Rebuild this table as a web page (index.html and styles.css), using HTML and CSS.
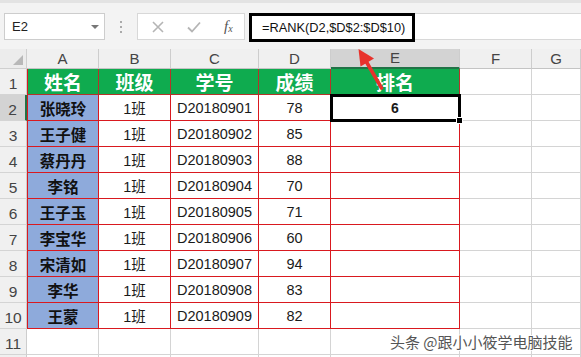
FILE: index.html
```html
<!DOCTYPE html>
<html>
<head>
<meta charset="utf-8">
<link rel="stylesheet" href="styles.css">
</head>
<body>
<div class="app">
  <div class="toolbar">
    <div class="namebox"><span>E2</span><span class="dd"></span></div>
    <div class="dots"><i></i><i></i><i></i></div>
    <div class="fxbtns">
      <svg class="ic" width="14" height="14" viewBox="0 0 14 14"><path d="M2 2L12 12M12 2L2 12" stroke="#b5b5b5" stroke-width="1.6" fill="none"/></svg>
      <svg class="ic" width="16" height="14" viewBox="0 0 16 14"><path d="M2 7.5L6 11.5L14 2.5" stroke="#b5b5b5" stroke-width="1.8" fill="none"/></svg>
      <span class="fx">f<sub>x</sub></span>
    </div>
    <div class="formula"><div class="fbox">=RANK(D2,$D$2:$D$10)</div></div>
  </div>
  <div class="sheet">
    <div class="corner"><span class="tri"></span></div>
    <div class="ch">A</div><div class="ch">B</div><div class="ch">C</div><div class="ch">D</div><div class="ch sel">E</div><div class="ch">F</div><div class="ch">G</div>

    <div class="rh">1</div>
    <div class="c hd first">姓名</div><div class="c hd">班级</div><div class="c hd">学号</div><div class="c hd">成绩</div><div class="c hd">排名</div><div class="c"></div><div class="c"></div>

    <div class="rh rsel">2</div>
    <div class="c nm first">张晓玲</div><div class="c t">1班</div><div class="c t">D20180901</div><div class="c t">78</div><div class="c t active"><b>6</b></div><div class="c"></div><div class="c"></div>

    <div class="rh">3</div>
    <div class="c nm first">王子健</div><div class="c t">1班</div><div class="c t">D20180902</div><div class="c t">85</div><div class="c t"></div><div class="c"></div><div class="c"></div>

    <div class="rh">4</div>
    <div class="c nm first">蔡丹丹</div><div class="c t">1班</div><div class="c t">D20180903</div><div class="c t">88</div><div class="c t"></div><div class="c"></div><div class="c"></div>

    <div class="rh">5</div>
    <div class="c nm first">李铭</div><div class="c t">1班</div><div class="c t">D20180904</div><div class="c t">70</div><div class="c t"></div><div class="c"></div><div class="c"></div>

    <div class="rh">6</div>
    <div class="c nm first">王子玉</div><div class="c t">1班</div><div class="c t">D20180905</div><div class="c t">71</div><div class="c t"></div><div class="c"></div><div class="c"></div>

    <div class="rh">7</div>
    <div class="c nm first">李宝华</div><div class="c t">1班</div><div class="c t">D20180906</div><div class="c t">60</div><div class="c t"></div><div class="c"></div><div class="c"></div>

    <div class="rh">8</div>
    <div class="c nm first">宋清如</div><div class="c t">1班</div><div class="c t">D20180907</div><div class="c t">94</div><div class="c t"></div><div class="c"></div><div class="c"></div>

    <div class="rh">9</div>
    <div class="c nm first">李华</div><div class="c t">1班</div><div class="c t">D20180908</div><div class="c t">83</div><div class="c t"></div><div class="c"></div><div class="c"></div>

    <div class="rh">10</div>
    <div class="c nm first">王蒙</div><div class="c t">1班</div><div class="c t">D20180909</div><div class="c t">82</div><div class="c t"></div><div class="c"></div><div class="c"></div>

    <div class="rh">11</div>
    <div class="c"></div><div class="c"></div><div class="c"></div><div class="c"></div><div class="c"></div><div class="c"></div><div class="c"></div>

    <div class="rh"></div>
    <div class="c"></div><div class="c"></div><div class="c"></div><div class="c"></div><div class="c"></div><div class="c"></div><div class="c"></div>
  </div>
  <svg class="arrow" width="581" height="357" viewBox="0 0 581 357">
    <path d="M381.5 88 L366.5 62" stroke="#e8322c" stroke-width="3.6" stroke-linecap="round" fill="none"/>
    <polygon points="358.5,49 374,58.5 360.5,66.5" fill="#e8322c"/>
  </svg>
  <div class="wm">头条 @跟小小筱学电脑技能</div>
</div>
</body>
</html>
```
FILE: styles.css
```css
html, body {
  margin: 0;
  padding: 0;
  background: #ffffff;
}
.app {
  position: relative;
  width: 581px;
  height: 357px;
  overflow: hidden;
  font-family: "Liberation Sans", Arial, sans-serif;
}
.toolbar {
  height: 49px;
  box-sizing: border-box;
  background: #f3f3f3;
  border-top: 3px solid #e3e3e3;
  padding-top: 10px;
  display: flex;
  align-items: flex-start;
}
.namebox {
  margin-left: 4px;
  width: 101px;
  height: 27px;
  box-sizing: border-box;
  background: #fff;
  border: 1px solid #cdcdcd;
  display: flex;
  align-items: center;
  justify-content: space-between;
  padding: 0 5px 0 7px;
  font-size: 13px;
  color: #222;
}
.dd {
  width: 0;
  height: 0;
  border-left: 4px solid transparent;
  border-right: 4px solid transparent;
  border-top: 4px solid #777;
}
.dots {
  width: 32px;
  height: 27px;
  display: flex;
  flex-direction: column;
  align-items: center;
  justify-content: center;
  gap: 3px;
}
.dots i {
  display: block;
  width: 2px;
  height: 2px;
  background: #aaa;
}
.fxbtns {
  width: 108px;
  height: 27px;
  box-sizing: border-box;
  background: #fff;
  border: 1px solid #d8d8d8;
  display: flex;
  align-items: center;
  padding-left: 13px;
  gap: 21px;
}
.fx {
  font-family: "Liberation Serif", serif;
  font-style: italic;
  font-size: 15px;
  color: #555;
  margin-left: 1px;
}
.fx sub {
  font-size: 10px;
  vertical-align: -1px;
}
.formula {
  flex: 1;
  height: 27px;
  margin-left: 4px;
  box-sizing: border-box;
  background: #fff;
  border-top: 1px solid #d8d8d8;
  border-bottom: 1px solid #d8d8d8;
  position: relative;
}
.fbox {
  position: absolute;
  left: 0;
  top: -1px;
  width: 166px;
  height: 29px;
  box-sizing: border-box;
  border: 3px solid #000;
  font-size: 12.8px;
  line-height: 23px;
  padding-left: 10px;
  color: #111;
  white-space: nowrap;
}
.sheet {
  display: grid;
  grid-template-columns: 27px 72px 72px 88px 72px 129px 72px 1fr;
  grid-template-rows: 20px repeat(12, 26px);
}
.sheet > div {
  box-sizing: border-box;
}
.corner {
  background: #ececec;
  border-right: 1px solid #cfcfcf;
  border-bottom: 1px solid #cfcfcf;
  position: relative;
}
.tri {
  position: absolute;
  right: 3px;
  bottom: 3px;
  width: 0;
  height: 0;
  border-left: 10px solid transparent;
  border-bottom: 10px solid #b8b8b8;
}
.ch {
  background: #f0f0f0;
  border-right: 1px solid #cdcdcd;
  border-bottom: 1px solid #c4c4c4;
  display: flex;
  align-items: flex-end;
  justify-content: center;
  font-size: 15px;
  color: #444;
  padding-bottom: 1px;
}
.ch.sel {
  background: #d3d3d3;
  border-bottom: 2px solid #217346;
}
.rh {
  background: #f0f0f0;
  border-right: 1px solid #cdcdcd;
  border-bottom: 1px solid #d4d4d4;
  display: flex;
  align-items: flex-end;
  justify-content: center;
  font-size: 15.5px;
  color: #444;
  padding-bottom: 1px;
}
.rh.rsel {
  background: #d3d3d3;
  border-right: 2px solid #217346;
}
.c {
  border-right: 1px solid #d4d4d4;
  border-bottom: 1px solid #d4d4d4;
  display: flex;
  align-items: center;
  justify-content: center;
  color: #1a1a1a;
}
.c.hd {
  background: #0fab4f;
  color: #fff;
  font-family: "Noto Sans CJK SC", sans-serif;
  font-weight: 700;
  font-size: 19px;
  border-right: 1px solid #b5332a;
  border-bottom: 1px solid #b5332a;
  letter-spacing: 0;
}
.c.nm {
  background: #8eaadb;
  font-family: "Noto Sans CJK SC", sans-serif;
  font-weight: 700;
  font-size: 15.5px;
  color: #111;
  border-right: 1px solid #d9191f;
  border-bottom: 1px solid #d9191f;
}
.c.first {
  border-left: 1px solid #d9191f;
}
.c.t {
  font-family: "Liberation Sans", "Noto Sans CJK SC", sans-serif;
  font-size: 14.5px;
  border-right: 1px solid #d9191f;
  border-bottom: 1px solid #d9191f;
}
.c.active {
  position: relative;
}
.c.active b {
  font-size: 14px;
}
.c.active::after {
  content: "";
  position: absolute;
  left: -1px;
  top: -1px;
  right: -2px;
  bottom: -2px;
  border: 3px solid #000;
}
.c.active::before {
  content: "";
  position: absolute;
  right: -4px;
  bottom: -4px;
  width: 5px;
  height: 5px;
  background: #000;
  border: 1px solid #fff;
  z-index: 2;
}
.arrow {
  position: absolute;
  left: 0;
  top: 0;
  pointer-events: none;
}
.wm {
  position: absolute;
  left: 390px;
  top: 331px;
  font-family: "Noto Sans CJK SC", sans-serif;
  font-size: 15px;
  color: #555;
  white-space: nowrap;
  text-shadow: 0 0 1px #fff, 1px 1px 0 #fff, -1px -1px 0 #fff, 1px -1px 0 #fff, -1px 1px 0 #fff;
}
```
